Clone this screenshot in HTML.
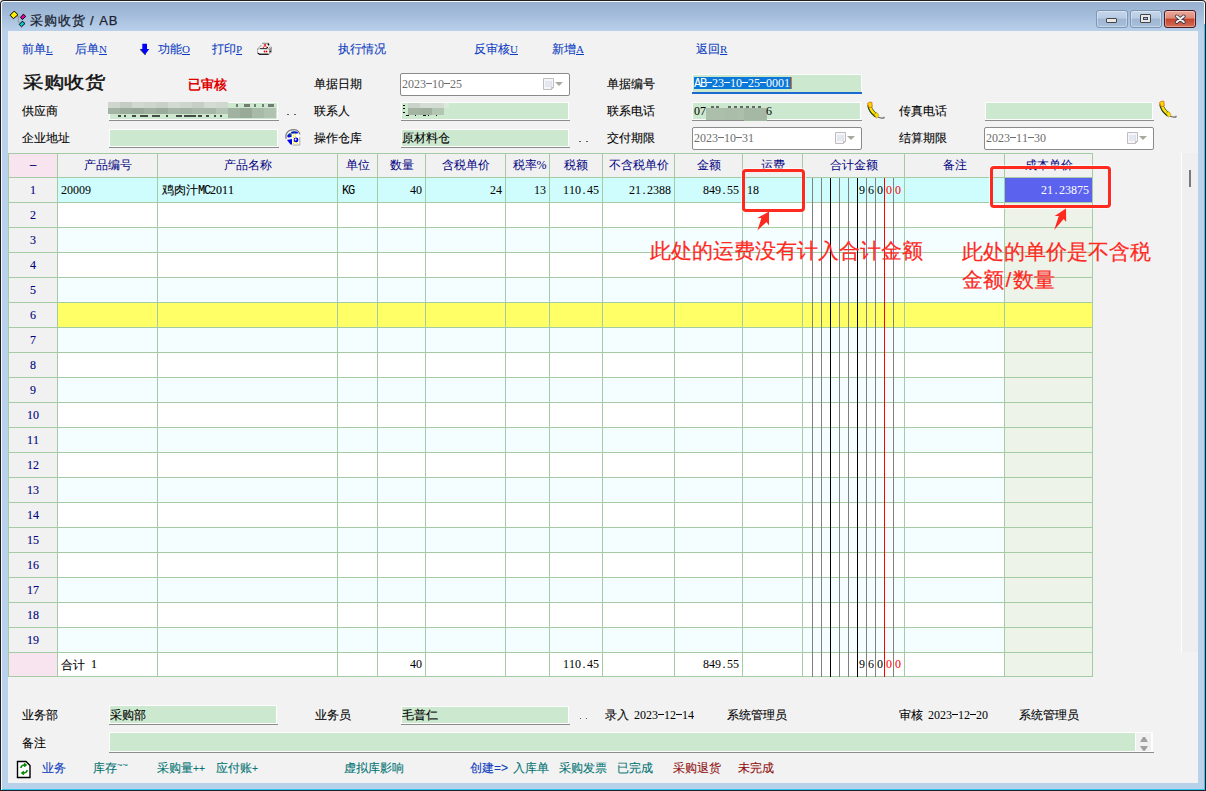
<!DOCTYPE html>
<html><head><meta charset="utf-8"><title>采购收货</title><style>
html,body{margin:0;padding:0;}
body{width:1206px;height:791px;overflow:hidden;position:relative;background:#f0f0f0;font-family:"Liberation Sans",sans-serif;}
.t{position:absolute;white-space:pre;}
.r{position:absolute;box-sizing:border-box;}
.k{-webkit-text-stroke-width:0.1px;}
.c{display:inline-block;width:6px;text-align:center;font-family:'Liberation Serif',serif;}
.hy{display:inline-block;width:6px;height:1px;background:currentColor;vertical-align:4px;}
.n{font-size:12px;line-height:14px;font-family:'Liberation Serif',serif;}
</style></head><body>
<div class="r" style="left:0px;top:0px;width:1206px;height:791px;background:#202020;border-radius:4px 4px 0 0"></div>
<div class="r" style="left:1px;top:1px;width:1204px;height:789px;background:#f4f8fc;border-radius:3px 3px 0 0"></div>
<div class="r" style="left:2px;top:2px;width:1202px;height:787px;background:linear-gradient(#97b0cf 0px,#a2bbd9 12px,#b5cde8 26px,#b9d1ea 30px,#b9d1ea 100%);border-radius:2px 2px 0 0"></div>
<div class="r" style="left:1204px;top:24px;width:1px;height:766px;background:#2ec8f2"></div>
<div class="r" style="left:2px;top:789px;width:1203px;height:1px;background:#2ec8f2"></div>
<div class="r" style="left:1205px;top:24px;width:1px;height:767px;background:#202020"></div>
<div class="r" style="left:0px;top:790px;width:1206px;height:1px;background:#202020"></div>
<div class="r" style="left:8px;top:31px;width:1190px;height:752px;background:#f2f2f2"></div>
<svg class="r" style="left:9px;top:10px" width="18" height="18" viewBox="0 0 18 18">
<path d="M7 6.3 H11 M9.3 6.3 V12.3 H11" stroke="#999" stroke-width="1" fill="none"/>
<polygon points="1.1,5.2 5.2,1.1 9,4.7 4.4,8.7" fill="#ffee00" stroke="#000" stroke-width="1"/>
<polygon points="11.5,7.4 14.3,4.2 16.8,6.4 13.3,9.5" fill="#ee00aa" stroke="#000" stroke-width="1"/>
<polygon points="10.2,14.5 13.3,11.2 16,13.5 12.5,16.8" fill="#00cccc" stroke="#000" stroke-width="1"/>
</svg>
<div class="t" style="left:30px;top:13px;font-size:13px;line-height:16px;color:#1a2230;font-family:'Liberation Sans', sans-serif;-webkit-text-stroke:0.25px #1a2230;letter-spacing:0.9px;word-spacing:0px;">采购收货 / AB</div>
<div class="r" style="left:1096px;top:10px;width:32px;height:18px;border:1px solid #7e96b4;border-radius:3px;background:linear-gradient(#c5d7ec 0%,#b6cbe4 45%,#9fb6d2 50%,#a9c0dc 100%);box-shadow:inset 0 0 0 1px rgba(255,255,255,0.35)"><div class="r" style="left:9px;top:7px;width:11px;height:5px;background:#e8e8e8;border:1px solid #444;border-radius:1px"></div></div>
<div class="r" style="left:1130px;top:10px;width:32px;height:18px;border:1px solid #7e96b4;border-radius:3px;background:linear-gradient(#c5d7ec 0%,#b6cbe4 45%,#9fb6d2 50%,#a9c0dc 100%);box-shadow:inset 0 0 0 1px rgba(255,255,255,0.35)"><div class="r" style="left:9px;top:3px;width:11px;height:9px;background:#e8e8e8;border:1px solid #444;border-radius:1px"><div class="r" style="left:2px;top:2px;width:5px;height:3px;border:1px solid #445;background:#a8bcd8"></div></div></div>
<div class="r" style="left:1164px;top:10px;width:32px;height:18px;border:1px solid #4a1a1e;border-radius:3px;background:linear-gradient(#eca89a 0%,#dd8a78 45%,#c4422a 50%,#d4705a 100%);box-shadow:inset 0 0 0 1px rgba(255,255,255,0.35)"><svg class="r" style="left:9px;top:3px" width="13" height="11" viewBox="0 0 13 11"><path d="M2.8 2.3 L9.8 8 M9.8 2.3 L2.8 8" stroke="#3a3a4a" stroke-width="3.6" stroke-linecap="round"/><path d="M2.8 2.3 L9.8 8 M9.8 2.3 L2.8 8" stroke="#f4f4f4" stroke-width="2.0" stroke-linecap="round"/></svg></div>
<div class="t" style="left:22px;top:42px;line-height:14px;color:#0c3cc0;font-size:12px;-webkit-text-stroke:0.1px #0c3cc0">前单<span style="font-family:'Liberation Serif', serif;font-size:11px;text-decoration:underline;-webkit-text-stroke:0">L</span></div>
<div class="t" style="left:75px;top:42px;line-height:14px;color:#0c3cc0;font-size:12px;-webkit-text-stroke:0.1px #0c3cc0">后单<span style="font-family:'Liberation Serif', serif;font-size:11px;text-decoration:underline;-webkit-text-stroke:0">N</span></div>
<svg class="r" style="left:134px;top:38px" width="22" height="22" viewBox="0 0 22 22"><path d="M6.3 11.3 L11.5 16.8" stroke="#5a5a20" stroke-width="1.3"/><path d="M8.3 5.8 H13 V11 H15.3 L11 16.7 L6.3 11 H8.3 Z" fill="#0000ff"/></svg>
<div class="t" style="left:158px;top:42px;line-height:14px;color:#0c3cc0;font-size:12px;-webkit-text-stroke:0.1px #0c3cc0">功能<span style="font-family:'Liberation Serif', serif;font-size:11px;text-decoration:underline;-webkit-text-stroke:0">O</span></div>
<div class="t" style="left:212px;top:42px;line-height:14px;color:#0c3cc0;font-size:12px;-webkit-text-stroke:0.1px #0c3cc0">打印<span style="font-family:'Liberation Serif', serif;font-size:11px;text-decoration:underline;-webkit-text-stroke:0">P</span></div>
<svg class="r" style="left:252px;top:38px" width="26" height="22" viewBox="0 0 26 22"><path d="M10 5.3 H17" stroke="#888" stroke-width="1"/><circle cx="16.5" cy="6.5" r="0.9" fill="#000"/><path d="M11 9.5 L14 6.3 M12 6.5 L15 9.5" stroke="#e00" stroke-width="1.1" stroke-dasharray="1 0.6"/><path d="M9.5 7 L5.5 11" stroke="#888" stroke-width="0.9"/><path d="M8 10.5 H15 L15.6 9" stroke="#000" stroke-width="1" fill="none"/><path d="M5.5 11 H17 L17.5 9 H19.5 V14 L17 16.5 H7 L5.5 15 Z" fill="#fff" stroke="#999" stroke-width="0.8"/><path d="M16.8 11 L19.7 9 V13.5 L17 16" fill="#999"/><path d="M7 16.2 H16.5" stroke="#000" stroke-width="1.2"/><circle cx="6.5" cy="15.5" r="0.8" fill="#000"/><circle cx="18.3" cy="13.5" r="0.8" fill="#222"/><circle cx="12.5" cy="13.5" r="0.9" fill="#e00"/><circle cx="14.5" cy="13.5" r="0.9" fill="#e00"/></svg>
<div class="t k" style="left:338px;top:42px;font-size:12px;line-height:14px;color:#0c3cc0;font-family:'Liberation Sans', sans-serif;-webkit-text-stroke:0.1px #0c3cc0;">执行情况</div>
<div class="t" style="left:474px;top:42px;line-height:14px;color:#0c3cc0;font-size:12px;-webkit-text-stroke:0.1px #0c3cc0">反审核<span style="font-family:'Liberation Serif', serif;font-size:11px;text-decoration:underline;-webkit-text-stroke:0">U</span></div>
<div class="t" style="left:552px;top:42px;line-height:14px;color:#0c3cc0;font-size:12px;-webkit-text-stroke:0.1px #0c3cc0">新增<span style="font-family:'Liberation Serif', serif;font-size:11px;text-decoration:underline;-webkit-text-stroke:0">A</span></div>
<div class="t" style="left:696px;top:42px;line-height:14px;color:#0c3cc0;font-size:12px;-webkit-text-stroke:0.1px #0c3cc0">返回<span style="font-family:'Liberation Serif', serif;font-size:11px;text-decoration:underline;-webkit-text-stroke:0">R</span></div>
<div class="t" style="left:23px;top:73px;font-size:20px;line-height:20px;color:#111;font-family:'Liberation Serif', serif;-webkit-text-stroke:0.5px #111;transform:scale(1.03,0.86);transform-origin:0 0;">采购收货</div>
<div class="t" style="left:188px;top:78px;font-size:13px;line-height:14px;color:#e00000;font-family:'Liberation Sans', sans-serif;font-weight:bold;">已审核</div>
<div class="t k" style="left:314px;top:77px;font-size:12px;line-height:14px;color:#000;font-family:'Liberation Sans', sans-serif;">单据日期</div>
<div class="r" style="left:400px;top:73px;width:170px;height:23px;background:#fff;border:1px solid #8a8a8a;border-radius:2px"></div>
<div class="t n" style="left:402px;top:77px;color:#6d6d6d;"><span class="c">2</span><span class="c">0</span><span class="c">2</span><span class="c">3</span><span class="c"><i class="hy"></i></span><span class="c">1</span><span class="c">0</span><span class="c"><i class="hy"></i></span><span class="c">2</span><span class="c">5</span></div>
<svg class="r" style="left:543px;top:78px" width="12" height="13" viewBox="0 0 12 13"><path d="M0.5 0.5 H10.5 V9.5 L8.5 11.5 H0.5 Z" fill="#f4f6fc" stroke="#c4bcbc" stroke-width="1"/><rect x="2" y="3" width="7" height="6" fill="#dde0e8"/><g fill="#fff"><rect x="2.5" y="3.5" width="1" height="1"/><rect x="4.5" y="3.5" width="1" height="1"/><rect x="6.5" y="3.5" width="1" height="1"/><rect x="2.5" y="5.5" width="1" height="1"/><rect x="4.5" y="5.5" width="1" height="1"/><rect x="6.5" y="5.5" width="1" height="1"/><rect x="2.5" y="7.5" width="1" height="1"/><rect x="4.5" y="7.5" width="1" height="1"/><rect x="6.5" y="7.5" width="1" height="1"/></g><path d="M8.5 11.5 V9.5 H10.5" fill="#ccc" stroke="#c4bcbc" stroke-width="1"/></svg>
<svg class="r" style="left:555px;top:82px" width="8" height="5" viewBox="0 0 8 5"><path d="M0 0 H8 L4 4 Z" fill="#a8a8a0"/></svg>
<div class="t k" style="left:607px;top:77px;font-size:12px;line-height:14px;color:#000;font-family:'Liberation Sans', sans-serif;">单据编号</div>
<div class="r" style="left:692px;top:74px;width:170px;height:19px;background:#cce8cf;border:1px solid #fbfbfb"></div>
<div class="r" style="left:692px;top:92px;width:170px;height:2px;background:#1a6ad0"></div>
<div class="r" style="left:694px;top:77px;width:98px;height:12px;background:#0a78d8"></div>
<div class="t n" style="left:694px;top:76px;color:#fff;"><span class="c" style="font-size:12px;font-family:'Liberation Mono',monospace">A</span><span class="c" style="font-size:12px;font-family:'Liberation Mono',monospace">B</span><span class="c"><i class="hy"></i></span><span class="c">2</span><span class="c">3</span><span class="c"><i class="hy"></i></span><span class="c">1</span><span class="c">0</span><span class="c"><i class="hy"></i></span><span class="c">2</span><span class="c">5</span><span class="c"><i class="hy"></i></span><span class="c">0</span><span class="c">0</span><span class="c">0</span><span class="c">1</span></div>
<div class="r" style="left:791px;top:77px;width:1px;height:12px;background:#ff6a00"></div>
<div class="t k" style="left:22px;top:104px;font-size:12px;line-height:14px;color:#000;font-family:'Liberation Sans', sans-serif;">供应商</div>
<div class="r" style="left:109px;top:102px;width:169px;height:18px;background:#cce8cf;border:1px solid #fdfdfd"></div>
<div class="r" style="left:109px;top:120px;width:170px;height:1px;background:#8c8c8c"></div>
<div class="r" style="left:108px;top:102px;width:12px;height:6px;background:#ced6ce"></div>
<div class="r" style="left:120px;top:102px;width:12px;height:6px;background:#c4ccc4"></div>
<div class="r" style="left:132px;top:102px;width:12px;height:6px;background:#d0d8d0"></div>
<div class="r" style="left:144px;top:102px;width:12px;height:6px;background:#cdd5cd"></div>
<div class="r" style="left:156px;top:102px;width:12px;height:6px;background:#c8d0c8"></div>
<div class="r" style="left:168px;top:102px;width:12px;height:6px;background:#d2dad2"></div>
<div class="r" style="left:180px;top:102px;width:12px;height:6px;background:#cdd6cd"></div>
<div class="r" style="left:192px;top:102px;width:12px;height:6px;background:#c6cec6"></div>
<div class="r" style="left:204px;top:102px;width:12px;height:6px;background:#d3dbd3"></div>
<div class="r" style="left:216px;top:102px;width:12px;height:6px;background:#cfd7cf"></div>
<div class="r" style="left:108px;top:108px;width:12px;height:6px;background:#a4b4a4"></div>
<div class="r" style="left:120px;top:108px;width:12px;height:6px;background:#9cac9c"></div>
<div class="r" style="left:132px;top:108px;width:12px;height:6px;background:#98a898"></div>
<div class="r" style="left:144px;top:108px;width:12px;height:6px;background:#a0b0a0"></div>
<div class="r" style="left:156px;top:108px;width:12px;height:6px;background:#9bab9b"></div>
<div class="r" style="left:168px;top:108px;width:12px;height:6px;background:#a6b6a6"></div>
<div class="r" style="left:180px;top:108px;width:12px;height:6px;background:#a3b3a3"></div>
<div class="r" style="left:192px;top:108px;width:12px;height:6px;background:#a9b9a9"></div>
<div class="r" style="left:204px;top:108px;width:12px;height:6px;background:#a7b7a7"></div>
<div class="r" style="left:216px;top:108px;width:12px;height:6px;background:#b4c4b4"></div>
<div class="r" style="left:228px;top:108px;width:12px;height:10px;background:#a2b2a2"></div>
<div class="r" style="left:240px;top:108px;width:12px;height:10px;background:#9aaa9a"></div>
<div class="r" style="left:252px;top:108px;width:12px;height:10px;background:#a8baa8"></div>
<div class="r" style="left:264px;top:108px;width:12px;height:10px;background:#b0c2b0"></div>
<div class="r" style="left:118px;top:115px;width:3px;height:2px;background:#222;opacity:0.8"></div>
<div class="r" style="left:124px;top:115px;width:2px;height:2px;background:#222;opacity:0.8"></div>
<div class="r" style="left:132px;top:115px;width:4px;height:2px;background:#222;opacity:0.8"></div>
<div class="r" style="left:140px;top:115px;width:8px;height:2px;background:#222;opacity:0.8"></div>
<div class="r" style="left:152px;top:115px;width:8px;height:2px;background:#222;opacity:0.8"></div>
<div class="r" style="left:166px;top:115px;width:2px;height:2px;background:#222;opacity:0.8"></div>
<div class="r" style="left:176px;top:115px;width:6px;height:2px;background:#222;opacity:0.8"></div>
<div class="r" style="left:184px;top:115px;width:12px;height:2px;background:#222;opacity:0.8"></div>
<div class="r" style="left:198px;top:115px;width:4px;height:2px;background:#222;opacity:0.8"></div>
<div class="r" style="left:206px;top:115px;width:3px;height:2px;background:#222;opacity:0.8"></div>
<div class="r" style="left:214px;top:115px;width:2px;height:2px;background:#222;opacity:0.8"></div>
<div class="r" style="left:220px;top:115px;width:2px;height:2px;background:#222;opacity:0.8"></div>
<div class="r" style="left:236px;top:104px;width:2px;height:3px;background:#333;opacity:0.6"></div>
<div class="r" style="left:244px;top:104px;width:6px;height:3px;background:#333;opacity:0.6"></div>
<div class="r" style="left:254px;top:104px;width:2px;height:3px;background:#333;opacity:0.6"></div>
<div class="r" style="left:262px;top:104px;width:2px;height:3px;background:#333;opacity:0.6"></div>
<div class="r" style="left:268px;top:104px;width:6px;height:3px;background:#333;opacity:0.6"></div>
<div class="r" style="left:287px;top:114px;width:2px;height:1px;background:#606060"></div>
<div class="r" style="left:294px;top:114px;width:2px;height:1px;background:#606060"></div>
<div class="t k" style="left:314px;top:104px;font-size:12px;line-height:14px;color:#000;font-family:'Liberation Sans', sans-serif;">联系人</div>
<div class="r" style="left:401px;top:102px;width:168px;height:18px;background:#cce8cf;border:1px solid #fdfdfd"></div>
<div class="r" style="left:401px;top:120px;width:169px;height:1px;background:#8c8c8c"></div>
<div class="r" style="left:403px;top:105px;width:2px;height:1px;background:#111"></div>
<div class="r" style="left:403px;top:108px;width:2px;height:1px;background:#111"></div>
<div class="r" style="left:403px;top:112px;width:2px;height:1px;background:#111"></div>
<div class="r" style="left:408px;top:103px;width:12px;height:5px;background:#c9d3c9"></div>
<div class="r" style="left:420px;top:103px;width:12px;height:5px;background:#d3ddd3"></div>
<div class="r" style="left:432px;top:103px;width:12px;height:5px;background:#d2dcd2"></div>
<div class="r" style="left:444px;top:103px;width:5px;height:5px;background:#dce8dc"></div>
<div class="r" style="left:408px;top:108px;width:12px;height:7px;background:#a3b4a3"></div>
<div class="r" style="left:420px;top:108px;width:12px;height:7px;background:#9fb09f"></div>
<div class="r" style="left:432px;top:108px;width:12px;height:7px;background:#b3c5b3"></div>
<div class="r" style="left:406px;top:115px;width:3px;height:1px;background:#111"></div>
<div class="r" style="left:415px;top:115px;width:1px;height:1px;background:#111"></div>
<div class="r" style="left:423px;top:115px;width:3px;height:1px;background:#111"></div>
<div class="r" style="left:428px;top:115px;width:1px;height:1px;background:#111"></div>
<div class="r" style="left:436px;top:115px;width:1px;height:1px;background:#111"></div>
<div class="t k" style="left:607px;top:104px;font-size:12px;line-height:14px;color:#000;font-family:'Liberation Sans', sans-serif;">联系电话</div>
<div class="r" style="left:692px;top:102px;width:169px;height:18px;background:#cce8cf;border:1px solid #fdfdfd"></div>
<div class="r" style="left:692px;top:120px;width:170px;height:1px;background:#8c8c8c"></div>
<div class="t n" style="left:694px;top:104px;color:#000;"><span class="c">0</span><span class="c">7</span></div>
<div class="r" style="left:706px;top:108px;width:61px;height:12px;background:#abbfab"></div>
<div class="r" style="left:725px;top:108px;width:12px;height:12px;background:#a9bda9"></div>
<div class="r" style="left:744px;top:108px;width:23px;height:13px;background:#a4b8a4"></div>
<div class="r" style="left:711px;top:106px;width:3px;height:2px;background:#333;opacity:0.7"></div>
<div class="r" style="left:716px;top:106px;width:3px;height:2px;background:#333;opacity:0.7"></div>
<div class="r" style="left:728px;top:106px;width:3px;height:2px;background:#333;opacity:0.7"></div>
<div class="r" style="left:734px;top:106px;width:3px;height:2px;background:#333;opacity:0.7"></div>
<div class="r" style="left:740px;top:106px;width:3px;height:2px;background:#333;opacity:0.7"></div>
<div class="r" style="left:746px;top:106px;width:3px;height:2px;background:#333;opacity:0.7"></div>
<div class="r" style="left:752px;top:106px;width:3px;height:2px;background:#333;opacity:0.7"></div>
<div class="r" style="left:758px;top:106px;width:3px;height:2px;background:#333;opacity:0.7"></div>
<div class="t n" style="left:766px;top:104px;color:#000;"><span class="c">6</span></div>
<svg class="r" style="left:862px;top:98px" width="26" height="24" viewBox="0 0 26 24"><path d="M16 19.3 Q19 20.5 22 19.8 L22 18.8" stroke="#666" stroke-width="1.2" fill="none"/><path d="M7.5 8 Q8.5 13 13.5 17" stroke="#1a3a1a" stroke-width="4.2" fill="none" stroke-linecap="round"/><path d="M7.8 8 Q8.8 12.8 13.5 16.6" stroke="#ffe000" stroke-width="2.6" fill="none" stroke-linecap="round"/><path d="M5.5 5.5 Q7 3.8 9.8 4.2 L10.3 8.8 L7 9.8 Z" fill="#ffd800" stroke="#cc5a10" stroke-width="0.7"/><path d="M12 16 L15 14.7 L17 17.8 L14.3 20.3 Z" fill="#ffe000" stroke="#b09000" stroke-width="0.6"/></svg>
<div class="t k" style="left:899px;top:104px;font-size:12px;line-height:14px;color:#000;font-family:'Liberation Sans', sans-serif;">传真电话</div>
<div class="r" style="left:985px;top:102px;width:168px;height:18px;background:#cce8cf;border:1px solid #fdfdfd"></div>
<div class="r" style="left:985px;top:120px;width:169px;height:1px;background:#8c8c8c"></div>
<svg class="r" style="left:1154px;top:97px" width="26" height="24" viewBox="0 0 26 24"><path d="M16 19.3 Q19 20.5 22 19.8 L22 18.8" stroke="#666" stroke-width="1.2" fill="none"/><path d="M7.5 8 Q8.5 13 13.5 17" stroke="#1a3a1a" stroke-width="4.2" fill="none" stroke-linecap="round"/><path d="M7.8 8 Q8.8 12.8 13.5 16.6" stroke="#ffe000" stroke-width="2.6" fill="none" stroke-linecap="round"/><path d="M5.5 5.5 Q7 3.8 9.8 4.2 L10.3 8.8 L7 9.8 Z" fill="#ffd800" stroke="#cc5a10" stroke-width="0.7"/><path d="M12 16 L15 14.7 L17 17.8 L14.3 20.3 Z" fill="#ffe000" stroke="#b09000" stroke-width="0.6"/></svg>
<div class="t k" style="left:22px;top:131px;font-size:12px;line-height:14px;color:#000;font-family:'Liberation Sans', sans-serif;">企业地址</div>
<div class="r" style="left:109px;top:129px;width:169px;height:18px;background:#cce8cf;border:1px solid #fdfdfd"></div>
<div class="r" style="left:109px;top:147px;width:170px;height:1px;background:#8c8c8c"></div>
<svg class="r" style="left:280px;top:125px" width="26" height="24" viewBox="0 0 26 24"><path d="M6 14 Q5 8 9.5 5.5 Q13 4 16.5 5 Q19 6 20 9.5" stroke="#777" stroke-width="1.2" fill="none"/><path d="M11 7 Q14 5.5 18 7 L17.5 8.5 L11.5 8.5 Z" fill="#0000ee"/><path d="M13 6.5 L15 8" stroke="#080" stroke-width="1"/><path d="M9 8.5 H11.5 V12 L8 12.5 L7 11 Z" fill="#0000ee"/><rect x="9.5" y="8.5" width="1.5" height="2" fill="#080"/><path d="M7 15 L12 14 V19.5 L10.5 19.5 Z" fill="#0000ee"/><rect x="12" y="9" width="7.5" height="10.5" fill="#fff"/><path d="M19.8 12 V20 H12.5" stroke="#aaa" stroke-width="1" fill="none"/><circle cx="16" cy="15" r="2.4" fill="#0000cc"/><circle cx="15.6" cy="14.6" r="1" fill="#fff"/><g fill="#ffee00"><circle cx="13.5" cy="10.5" r="0.7"/><circle cx="15.5" cy="9.5" r="0.7"/><circle cx="15.5" cy="11.5" r="0.7"/><circle cx="13.5" cy="12.5" r="0.7"/><circle cx="13.5" cy="18.5" r="0.7"/><circle cx="15.5" cy="17.5" r="0.7"/><circle cx="17.5" cy="18.5" r="0.7"/><circle cx="13.5" cy="16.5" r="0.7"/></g></svg>
<div class="t k" style="left:314px;top:131px;font-size:12px;line-height:14px;color:#000;font-family:'Liberation Sans', sans-serif;">操作仓库</div>
<div class="r" style="left:401px;top:129px;width:168px;height:18px;background:#cce8cf;border:1px solid #fdfdfd"></div>
<div class="r" style="left:401px;top:147px;width:169px;height:1px;background:#8c8c8c"></div>
<div class="t k" style="left:402px;top:131px;font-size:12px;line-height:14px;color:#000;font-family:'Liberation Sans', sans-serif;">原材料仓</div>
<div class="r" style="left:579px;top:141px;width:2px;height:1px;background:#606060"></div>
<div class="r" style="left:586px;top:141px;width:2px;height:1px;background:#606060"></div>
<div class="t k" style="left:607px;top:131px;font-size:12px;line-height:14px;color:#000;font-family:'Liberation Sans', sans-serif;">交付期限</div>
<div class="r" style="left:692px;top:127px;width:170px;height:23px;background:#fff;border:1px solid #8a8a8a;border-radius:2px"></div>
<div class="t n" style="left:694px;top:131px;color:#6d6d6d;"><span class="c">2</span><span class="c">0</span><span class="c">2</span><span class="c">3</span><span class="c"><i class="hy"></i></span><span class="c">1</span><span class="c">0</span><span class="c"><i class="hy"></i></span><span class="c">3</span><span class="c">1</span></div>
<svg class="r" style="left:835px;top:132px" width="12" height="13" viewBox="0 0 12 13"><path d="M0.5 0.5 H10.5 V9.5 L8.5 11.5 H0.5 Z" fill="#f4f6fc" stroke="#c4bcbc" stroke-width="1"/><rect x="2" y="3" width="7" height="6" fill="#dde0e8"/><g fill="#fff"><rect x="2.5" y="3.5" width="1" height="1"/><rect x="4.5" y="3.5" width="1" height="1"/><rect x="6.5" y="3.5" width="1" height="1"/><rect x="2.5" y="5.5" width="1" height="1"/><rect x="4.5" y="5.5" width="1" height="1"/><rect x="6.5" y="5.5" width="1" height="1"/><rect x="2.5" y="7.5" width="1" height="1"/><rect x="4.5" y="7.5" width="1" height="1"/><rect x="6.5" y="7.5" width="1" height="1"/></g><path d="M8.5 11.5 V9.5 H10.5" fill="#ccc" stroke="#c4bcbc" stroke-width="1"/></svg>
<svg class="r" style="left:847px;top:136px" width="8" height="5" viewBox="0 0 8 5"><path d="M0 0 H8 L4 4 Z" fill="#a8a8a0"/></svg>
<div class="t k" style="left:899px;top:131px;font-size:12px;line-height:14px;color:#000;font-family:'Liberation Sans', sans-serif;">结算期限</div>
<div class="r" style="left:984px;top:127px;width:170px;height:23px;background:#fff;border:1px solid #8a8a8a;border-radius:2px"></div>
<div class="t n" style="left:986px;top:131px;color:#6d6d6d;"><span class="c">2</span><span class="c">0</span><span class="c">2</span><span class="c">3</span><span class="c"><i class="hy"></i></span><span class="c">1</span><span class="c">1</span><span class="c"><i class="hy"></i></span><span class="c">3</span><span class="c">0</span></div>
<svg class="r" style="left:1127px;top:132px" width="12" height="13" viewBox="0 0 12 13"><path d="M0.5 0.5 H10.5 V9.5 L8.5 11.5 H0.5 Z" fill="#f4f6fc" stroke="#c4bcbc" stroke-width="1"/><rect x="2" y="3" width="7" height="6" fill="#dde0e8"/><g fill="#fff"><rect x="2.5" y="3.5" width="1" height="1"/><rect x="4.5" y="3.5" width="1" height="1"/><rect x="6.5" y="3.5" width="1" height="1"/><rect x="2.5" y="5.5" width="1" height="1"/><rect x="4.5" y="5.5" width="1" height="1"/><rect x="6.5" y="5.5" width="1" height="1"/><rect x="2.5" y="7.5" width="1" height="1"/><rect x="4.5" y="7.5" width="1" height="1"/><rect x="6.5" y="7.5" width="1" height="1"/></g><path d="M8.5 11.5 V9.5 H10.5" fill="#ccc" stroke="#c4bcbc" stroke-width="1"/></svg>
<svg class="r" style="left:1139px;top:136px" width="8" height="5" viewBox="0 0 8 5"><path d="M0 0 H8 L4 4 Z" fill="#a8a8a0"/></svg>
<div class="r" style="left:8px;top:153px;width:1085px;height:524px;background:#ffffff"></div>
<div class="r" style="left:8px;top:153px;width:1085px;height:24px;background:#f1f1f1"></div>
<div class="r" style="left:8px;top:153px;width:49px;height:24px;background:#f7e4ef"></div>
<div class="r" style="left:8px;top:177px;width:49px;height:475px;background:#f1f1f1"></div>
<div class="r" style="left:8px;top:652px;width:49px;height:24px;background:#f7e4ef"></div>
<div class="r" style="left:57px;top:177px;width:1035px;height:25px;background:#cffcfc"></div>
<div class="r" style="left:57px;top:202px;width:1035px;height:25px;background:#ffffff"></div>
<div class="r" style="left:1004px;top:202px;width:88px;height:25px;background:#eef3e9"></div>
<div class="r" style="left:57px;top:227px;width:1035px;height:25px;background:#f4fdff"></div>
<div class="r" style="left:1004px;top:227px;width:88px;height:25px;background:#eef3e9"></div>
<div class="r" style="left:57px;top:252px;width:1035px;height:25px;background:#ffffff"></div>
<div class="r" style="left:1004px;top:252px;width:88px;height:25px;background:#eef3e9"></div>
<div class="r" style="left:57px;top:277px;width:1035px;height:25px;background:#f4fdff"></div>
<div class="r" style="left:1004px;top:277px;width:88px;height:25px;background:#eef3e9"></div>
<div class="r" style="left:57px;top:302px;width:1035px;height:25px;background:#ffff66"></div>
<div class="r" style="left:57px;top:327px;width:1035px;height:25px;background:#f4fdff"></div>
<div class="r" style="left:1004px;top:327px;width:88px;height:25px;background:#eef3e9"></div>
<div class="r" style="left:57px;top:352px;width:1035px;height:25px;background:#ffffff"></div>
<div class="r" style="left:1004px;top:352px;width:88px;height:25px;background:#eef3e9"></div>
<div class="r" style="left:57px;top:377px;width:1035px;height:25px;background:#f4fdff"></div>
<div class="r" style="left:1004px;top:377px;width:88px;height:25px;background:#eef3e9"></div>
<div class="r" style="left:57px;top:402px;width:1035px;height:25px;background:#ffffff"></div>
<div class="r" style="left:1004px;top:402px;width:88px;height:25px;background:#eef3e9"></div>
<div class="r" style="left:57px;top:427px;width:1035px;height:25px;background:#f4fdff"></div>
<div class="r" style="left:1004px;top:427px;width:88px;height:25px;background:#eef3e9"></div>
<div class="r" style="left:57px;top:452px;width:1035px;height:25px;background:#ffffff"></div>
<div class="r" style="left:1004px;top:452px;width:88px;height:25px;background:#eef3e9"></div>
<div class="r" style="left:57px;top:477px;width:1035px;height:25px;background:#f4fdff"></div>
<div class="r" style="left:1004px;top:477px;width:88px;height:25px;background:#eef3e9"></div>
<div class="r" style="left:57px;top:502px;width:1035px;height:25px;background:#ffffff"></div>
<div class="r" style="left:1004px;top:502px;width:88px;height:25px;background:#eef3e9"></div>
<div class="r" style="left:57px;top:527px;width:1035px;height:25px;background:#f4fdff"></div>
<div class="r" style="left:1004px;top:527px;width:88px;height:25px;background:#eef3e9"></div>
<div class="r" style="left:57px;top:552px;width:1035px;height:25px;background:#ffffff"></div>
<div class="r" style="left:1004px;top:552px;width:88px;height:25px;background:#eef3e9"></div>
<div class="r" style="left:57px;top:577px;width:1035px;height:25px;background:#f4fdff"></div>
<div class="r" style="left:1004px;top:577px;width:88px;height:25px;background:#eef3e9"></div>
<div class="r" style="left:57px;top:602px;width:1035px;height:25px;background:#ffffff"></div>
<div class="r" style="left:1004px;top:602px;width:88px;height:25px;background:#eef3e9"></div>
<div class="r" style="left:57px;top:627px;width:1035px;height:25px;background:#f4fdff"></div>
<div class="r" style="left:1004px;top:627px;width:88px;height:25px;background:#eef3e9"></div>
<div class="r" style="left:1004px;top:652px;width:88px;height:24px;background:#eef3e9"></div>
<div class="r" style="left:1005px;top:178px;width:87px;height:24px;background:#5a62ee"></div>
<div class="r" style="left:812px;top:178px;width:1px;height:499px;background:#808080"></div>
<div class="r" style="left:821px;top:178px;width:1px;height:499px;background:#808080"></div>
<div class="r" style="left:830px;top:178px;width:1px;height:499px;background:#000"></div>
<div class="r" style="left:839px;top:178px;width:1px;height:499px;background:#808080"></div>
<div class="r" style="left:848px;top:178px;width:1px;height:499px;background:#808080"></div>
<div class="r" style="left:857px;top:178px;width:1px;height:499px;background:#000"></div>
<div class="r" style="left:866px;top:178px;width:1px;height:499px;background:#808080"></div>
<div class="r" style="left:875px;top:178px;width:1px;height:499px;background:#808080"></div>
<div class="r" style="left:884px;top:178px;width:1px;height:499px;background:#ff0000"></div>
<div class="r" style="left:893px;top:178px;width:1px;height:499px;background:#808080"></div>
<div class="r" style="left:8px;top:153px;width:1px;height:524px;background:#a5cba5"></div>
<div class="r" style="left:57px;top:153px;width:1px;height:524px;background:#a5cba5"></div>
<div class="r" style="left:157px;top:153px;width:1px;height:524px;background:#a5cba5"></div>
<div class="r" style="left:337px;top:153px;width:1px;height:524px;background:#a5cba5"></div>
<div class="r" style="left:377px;top:153px;width:1px;height:524px;background:#a5cba5"></div>
<div class="r" style="left:425px;top:153px;width:1px;height:524px;background:#a5cba5"></div>
<div class="r" style="left:505px;top:153px;width:1px;height:524px;background:#a5cba5"></div>
<div class="r" style="left:549px;top:153px;width:1px;height:524px;background:#a5cba5"></div>
<div class="r" style="left:602px;top:153px;width:1px;height:524px;background:#a5cba5"></div>
<div class="r" style="left:674px;top:153px;width:1px;height:524px;background:#a5cba5"></div>
<div class="r" style="left:742px;top:153px;width:1px;height:524px;background:#a5cba5"></div>
<div class="r" style="left:802px;top:153px;width:1px;height:524px;background:#a5cba5"></div>
<div class="r" style="left:904px;top:153px;width:1px;height:524px;background:#a5cba5"></div>
<div class="r" style="left:1004px;top:153px;width:1px;height:524px;background:#a5cba5"></div>
<div class="r" style="left:1092px;top:153px;width:1px;height:524px;background:#a5cba5"></div>
<div class="r" style="left:8px;top:177px;width:1085px;height:1px;background:#a5cba5"></div>
<div class="r" style="left:8px;top:202px;width:1085px;height:1px;background:#a5cba5"></div>
<div class="r" style="left:8px;top:227px;width:1085px;height:1px;background:#a5cba5"></div>
<div class="r" style="left:8px;top:252px;width:1085px;height:1px;background:#a5cba5"></div>
<div class="r" style="left:8px;top:277px;width:1085px;height:1px;background:#a5cba5"></div>
<div class="r" style="left:8px;top:302px;width:1085px;height:1px;background:#a5cba5"></div>
<div class="r" style="left:8px;top:327px;width:1085px;height:1px;background:#a5cba5"></div>
<div class="r" style="left:8px;top:352px;width:1085px;height:1px;background:#a5cba5"></div>
<div class="r" style="left:8px;top:377px;width:1085px;height:1px;background:#a5cba5"></div>
<div class="r" style="left:8px;top:402px;width:1085px;height:1px;background:#a5cba5"></div>
<div class="r" style="left:8px;top:427px;width:1085px;height:1px;background:#a5cba5"></div>
<div class="r" style="left:8px;top:452px;width:1085px;height:1px;background:#a5cba5"></div>
<div class="r" style="left:8px;top:477px;width:1085px;height:1px;background:#a5cba5"></div>
<div class="r" style="left:8px;top:502px;width:1085px;height:1px;background:#a5cba5"></div>
<div class="r" style="left:8px;top:527px;width:1085px;height:1px;background:#a5cba5"></div>
<div class="r" style="left:8px;top:552px;width:1085px;height:1px;background:#a5cba5"></div>
<div class="r" style="left:8px;top:577px;width:1085px;height:1px;background:#a5cba5"></div>
<div class="r" style="left:8px;top:602px;width:1085px;height:1px;background:#a5cba5"></div>
<div class="r" style="left:8px;top:627px;width:1085px;height:1px;background:#a5cba5"></div>
<div class="r" style="left:8px;top:652px;width:1085px;height:1px;background:#a5cba5"></div>
<div class="r" style="left:8px;top:676px;width:1085px;height:1px;background:#a5cba5"></div>
<div class="r" style="left:8px;top:153px;width:1085px;height:1px;background:#a5cba5"></div>
<div class="r" style="left:812px;top:178px;width:1px;height:499px;background:#808080"></div>
<div class="r" style="left:821px;top:178px;width:1px;height:499px;background:#808080"></div>
<div class="r" style="left:830px;top:178px;width:1px;height:499px;background:#000"></div>
<div class="r" style="left:839px;top:178px;width:1px;height:499px;background:#808080"></div>
<div class="r" style="left:848px;top:178px;width:1px;height:499px;background:#808080"></div>
<div class="r" style="left:857px;top:178px;width:1px;height:499px;background:#000"></div>
<div class="r" style="left:866px;top:178px;width:1px;height:499px;background:#808080"></div>
<div class="r" style="left:875px;top:178px;width:1px;height:499px;background:#808080"></div>
<div class="r" style="left:884px;top:178px;width:1px;height:499px;background:#ff0000"></div>
<div class="r" style="left:893px;top:178px;width:1px;height:499px;background:#808080"></div>
<div class="t" style="left:-117.0px;width:300px;text-align:center;top:158px;font-size:12px;line-height:14px;color:#000080;font-family:'Liberation Sans', sans-serif;">–</div>
<div class="t" style="left:-42.5px;width:300px;text-align:center;top:158px;font-size:12px;line-height:14px;color:#000080;font-family:'Liberation Sans', sans-serif;">产品编号</div>
<div class="t" style="left:97.5px;width:300px;text-align:center;top:158px;font-size:12px;line-height:14px;color:#000080;font-family:'Liberation Sans', sans-serif;">产品名称</div>
<div class="t" style="left:207.5px;width:300px;text-align:center;top:158px;font-size:12px;line-height:14px;color:#000080;font-family:'Liberation Sans', sans-serif;">单位</div>
<div class="t" style="left:251.5px;width:300px;text-align:center;top:158px;font-size:12px;line-height:14px;color:#000080;font-family:'Liberation Sans', sans-serif;">数量</div>
<div class="t" style="left:315.5px;width:300px;text-align:center;top:158px;font-size:12px;line-height:14px;color:#000080;font-family:'Liberation Sans', sans-serif;">含税单价</div>
<div class="t" style="left:377.5px;width:300px;text-align:center;top:158px;font-size:12px;line-height:14px;color:#000080;font-family:'Liberation Sans', sans-serif;">税率<span class="c">%</span></div>
<div class="t" style="left:426.0px;width:300px;text-align:center;top:158px;font-size:12px;line-height:14px;color:#000080;font-family:'Liberation Sans', sans-serif;">税额</div>
<div class="t" style="left:488.5px;width:300px;text-align:center;top:158px;font-size:12px;line-height:14px;color:#000080;font-family:'Liberation Sans', sans-serif;">不含税单价</div>
<div class="t" style="left:558.5px;width:300px;text-align:center;top:158px;font-size:12px;line-height:14px;color:#000080;font-family:'Liberation Sans', sans-serif;">金额</div>
<div class="t" style="left:622.5px;width:300px;text-align:center;top:158px;font-size:12px;line-height:14px;color:#000080;font-family:'Liberation Sans', sans-serif;">运费</div>
<div class="t" style="left:703.5px;width:300px;text-align:center;top:158px;font-size:12px;line-height:14px;color:#000080;font-family:'Liberation Sans', sans-serif;">合计金额</div>
<div class="t" style="left:804.5px;width:300px;text-align:center;top:158px;font-size:12px;line-height:14px;color:#000080;font-family:'Liberation Sans', sans-serif;">备注</div>
<div class="t" style="left:898.5px;width:300px;text-align:center;top:158px;font-size:12px;line-height:14px;color:#000080;font-family:'Liberation Sans', sans-serif;">成本单价</div>
<div class="t n" style="left:30px;top:183px;color:#000080;-webkit-text-stroke:0.1px #000080;"><span class="c">1</span></div>
<div class="t n" style="left:30px;top:208px;color:#000080;-webkit-text-stroke:0.1px #000080;"><span class="c">2</span></div>
<div class="t n" style="left:30px;top:233px;color:#000080;-webkit-text-stroke:0.1px #000080;"><span class="c">3</span></div>
<div class="t n" style="left:30px;top:258px;color:#000080;-webkit-text-stroke:0.1px #000080;"><span class="c">4</span></div>
<div class="t n" style="left:30px;top:283px;color:#000080;-webkit-text-stroke:0.1px #000080;"><span class="c">5</span></div>
<div class="t n" style="left:30px;top:308px;color:#000080;-webkit-text-stroke:0.1px #000080;"><span class="c">6</span></div>
<div class="t n" style="left:30px;top:333px;color:#000080;-webkit-text-stroke:0.1px #000080;"><span class="c">7</span></div>
<div class="t n" style="left:30px;top:358px;color:#000080;-webkit-text-stroke:0.1px #000080;"><span class="c">8</span></div>
<div class="t n" style="left:30px;top:383px;color:#000080;-webkit-text-stroke:0.1px #000080;"><span class="c">9</span></div>
<div class="t n" style="left:27px;top:408px;color:#000080;-webkit-text-stroke:0.1px #000080;"><span class="c">1</span><span class="c">0</span></div>
<div class="t n" style="left:27px;top:433px;color:#000080;-webkit-text-stroke:0.1px #000080;"><span class="c">1</span><span class="c">1</span></div>
<div class="t n" style="left:27px;top:458px;color:#000080;-webkit-text-stroke:0.1px #000080;"><span class="c">1</span><span class="c">2</span></div>
<div class="t n" style="left:27px;top:483px;color:#000080;-webkit-text-stroke:0.1px #000080;"><span class="c">1</span><span class="c">3</span></div>
<div class="t n" style="left:27px;top:508px;color:#000080;-webkit-text-stroke:0.1px #000080;"><span class="c">1</span><span class="c">4</span></div>
<div class="t n" style="left:27px;top:533px;color:#000080;-webkit-text-stroke:0.1px #000080;"><span class="c">1</span><span class="c">5</span></div>
<div class="t n" style="left:27px;top:558px;color:#000080;-webkit-text-stroke:0.1px #000080;"><span class="c">1</span><span class="c">6</span></div>
<div class="t n" style="left:27px;top:583px;color:#000080;-webkit-text-stroke:0.1px #000080;"><span class="c">1</span><span class="c">7</span></div>
<div class="t n" style="left:27px;top:608px;color:#000080;-webkit-text-stroke:0.1px #000080;"><span class="c">1</span><span class="c">8</span></div>
<div class="t n" style="left:27px;top:633px;color:#000080;-webkit-text-stroke:0.1px #000080;"><span class="c">1</span><span class="c">9</span></div>
<div class="t n" style="left:61px;top:183px;color:#000;"><span class="c">2</span><span class="c">0</span><span class="c">0</span><span class="c">0</span><span class="c">9</span></div>
<div class="t k" style="left:162px;top:183px;line-height:14px;font-size:12px">鸡肉汁<span class="n"><span class="c" style="font-size:12px;font-family:'Liberation Mono',monospace">M</span><span class="c" style="font-size:12px;font-family:'Liberation Mono',monospace">C</span><span class="c">2</span><span class="c">0</span><span class="c">1</span><span class="c">1</span></span></div>
<div class="t n" style="left:342px;top:183px;color:#000;"><span class="c" style="font-size:12px;font-family:'Liberation Mono',monospace">K</span><span class="c" style="font-size:12px;font-family:'Liberation Mono',monospace">G</span></div>
<div class="t n" style="left:410px;top:183px;color:#000;"><span class="c">4</span><span class="c">0</span></div>
<div class="t n" style="left:490px;top:183px;color:#000;"><span class="c">2</span><span class="c">4</span></div>
<div class="t n" style="left:534px;top:183px;color:#000;"><span class="c">1</span><span class="c">3</span></div>
<div class="t n" style="left:563px;top:183px;color:#000;"><span class="c">1</span><span class="c">1</span><span class="c">0</span><span class="c">.</span><span class="c">4</span><span class="c">5</span></div>
<div class="t n" style="left:629px;top:183px;color:#000;"><span class="c">2</span><span class="c">1</span><span class="c">.</span><span class="c">2</span><span class="c">3</span><span class="c">8</span><span class="c">8</span></div>
<div class="t n" style="left:703px;top:183px;color:#000;"><span class="c">8</span><span class="c">4</span><span class="c">9</span><span class="c">.</span><span class="c">5</span><span class="c">5</span></div>
<div class="t n" style="left:747px;top:183px;color:#000;"><span class="c">1</span><span class="c">8</span></div>
<div class="t n" style="left:859px;top:183px;color:#000;"><span class="c">9</span></div>
<div class="t n" style="left:868px;top:183px;color:#000;"><span class="c">6</span></div>
<div class="t n" style="left:877px;top:183px;color:#000;"><span class="c">0</span></div>
<div class="t n" style="left:886px;top:183px;color:#ff0000;"><span class="c">0</span></div>
<div class="t n" style="left:895px;top:183px;color:#ff0000;"><span class="c">0</span></div>
<div class="t n" style="left:1041px;top:183px;color:#fff;"><span class="c">2</span><span class="c">1</span><span class="c">.</span><span class="c">2</span><span class="c">3</span><span class="c">8</span><span class="c">7</span><span class="c">5</span></div>
<div class="t k" style="left:61px;top:658px;line-height:14px;font-size:12px">合计<span class="n" style="position:relative;top:-1px;margin-left:6px"><span class="c">1</span></span></div>
<div class="t n" style="left:410px;top:657px;color:#000;"><span class="c">4</span><span class="c">0</span></div>
<div class="t n" style="left:563px;top:657px;color:#000;"><span class="c">1</span><span class="c">1</span><span class="c">0</span><span class="c">.</span><span class="c">4</span><span class="c">5</span></div>
<div class="t n" style="left:703px;top:657px;color:#000;"><span class="c">8</span><span class="c">4</span><span class="c">9</span><span class="c">.</span><span class="c">5</span><span class="c">5</span></div>
<div class="t n" style="left:859px;top:657px;color:#000;"><span class="c">9</span></div>
<div class="t n" style="left:868px;top:657px;color:#000;"><span class="c">6</span></div>
<div class="t n" style="left:877px;top:657px;color:#000;"><span class="c">0</span></div>
<div class="t n" style="left:886px;top:657px;color:#ff0000;"><span class="c">0</span></div>
<div class="t n" style="left:895px;top:657px;color:#ff0000;"><span class="c">0</span></div>
<div class="r" style="left:1182px;top:153px;width:16px;height:499px;background:#efefef"></div>
<div class="r" style="left:1181px;top:153px;width:1px;height:499px;background:#ffffff"></div>
<div class="r" style="left:1189px;top:170px;width:2px;height:17px;background:#7a7a7a"></div>
<div class="r" style="left:742px;top:169px;width:63px;height:43px;border:3px solid #ff2a1f;border-radius:4px;box-shadow:0 0 1px 1px rgba(255,255,255,0.7)"></div>
<div class="r" style="left:990px;top:166px;width:121px;height:42px;border:3px solid #ff2a1f;border-radius:4px;box-shadow:0 0 1px 1px rgba(255,255,255,0.7)"></div>
<svg class="r" style="left:0;top:0" width="1206" height="791" viewBox="0 0 1206 791"><path d="M769 211.5 L769 225.5 L766.5 222 L757.4 230.5 L761.4 218 L757 218.3 Z" fill="#ff2a1f"/><path d="M1066 208.6 L1066.2 222 L1063.7 219 L1054.2 230 L1058.8 216 L1054.6 216 Z" fill="#ff2a1f"/></svg>
<div class="t" style="left:650px;top:240px;font-size:21px;line-height:21px;color:#ff2a1f;font-family:'Liberation Sans', sans-serif;-webkit-text-stroke:0.2px #ff2a1f;">此处的运费没有计入合计金额</div>
<div class="t" style="left:962px;top:241px;font-size:21px;line-height:21px;color:#ff2a1f;font-family:'Liberation Sans', sans-serif;-webkit-text-stroke:0.2px #ff2a1f;">此处的单价是不含税</div>
<div class="t" style="left:962px;top:269px;font-size:21px;line-height:21px;color:#ff2a1f;font-family:'Liberation Sans', sans-serif;-webkit-text-stroke:0.2px #ff2a1f;">金额<span style="margin:0 1.5px">/</span>数量</div>
<div class="t k" style="left:22px;top:708px;font-size:12px;line-height:14px;color:#000;font-family:'Liberation Sans', sans-serif;">业务部</div>
<div class="r" style="left:109px;top:705px;width:168px;height:19px;background:#cce8cf;border:1px solid #fdfdfd"></div>
<div class="r" style="left:109px;top:724px;width:169px;height:1px;background:#8c8c8c"></div>
<div class="t k" style="left:110px;top:708px;font-size:12px;line-height:14px;color:#000;font-family:'Liberation Sans', sans-serif;">采购部</div>
<div class="t k" style="left:315px;top:708px;font-size:12px;line-height:14px;color:#000;font-family:'Liberation Sans', sans-serif;">业务员</div>
<div class="r" style="left:401px;top:706px;width:168px;height:18px;background:#cce8cf;border:1px solid #fdfdfd"></div>
<div class="r" style="left:401px;top:724px;width:169px;height:1px;background:#8c8c8c"></div>
<div class="t k" style="left:402px;top:708px;font-size:12px;line-height:14px;color:#000;font-family:'Liberation Sans', sans-serif;">毛普仁</div>
<div class="r" style="left:580px;top:718px;width:1px;height:1px;background:#606060"></div>
<div class="r" style="left:586px;top:718px;width:1px;height:1px;background:#606060"></div>
<div class="t k" style="left:605px;top:708px;font-size:12px;line-height:14px;color:#000;font-family:'Liberation Sans', sans-serif;">录入</div>
<div class="t n" style="left:634px;top:708px;color:#000;"><span class="c">2</span><span class="c">0</span><span class="c">2</span><span class="c">3</span><span class="c"><i class="hy"></i></span><span class="c">1</span><span class="c">2</span><span class="c"><i class="hy"></i></span><span class="c">1</span><span class="c">4</span></div>
<div class="t k" style="left:727px;top:708px;font-size:12px;line-height:14px;color:#000;font-family:'Liberation Sans', sans-serif;">系统管理员</div>
<div class="t k" style="left:899px;top:708px;font-size:12px;line-height:14px;color:#000;font-family:'Liberation Sans', sans-serif;">审核</div>
<div class="t n" style="left:928px;top:708px;color:#000;"><span class="c">2</span><span class="c">0</span><span class="c">2</span><span class="c">3</span><span class="c"><i class="hy"></i></span><span class="c">1</span><span class="c">2</span><span class="c"><i class="hy"></i></span><span class="c">2</span><span class="c">0</span></div>
<div class="t k" style="left:1019px;top:708px;font-size:12px;line-height:14px;color:#000;font-family:'Liberation Sans', sans-serif;">系统管理员</div>
<div class="t k" style="left:22px;top:736px;font-size:12px;line-height:14px;color:#000;font-family:'Liberation Sans', sans-serif;">备注</div>
<div class="r" style="left:109px;top:732px;width:1044px;height:20px;background:#cce8cf;border:1px solid #fdfdfd"></div>
<div class="r" style="left:109px;top:752px;width:1045px;height:1px;background:#8c8c8c"></div>
<div class="r" style="left:1135px;top:733px;width:17px;height:18px;background:#f0f0f0;border-left:1px solid #fff;border-right:1px solid #fff"></div>
<svg class="r" style="left:1138px;top:735px" width="12" height="17" viewBox="0 0 12 17"><path d="M2 7 L10 7 L7 2 L5 2 Z M2 11 L10 11 L7 15.8 L5 15.8 Z" fill="#a0a0a0"/></svg>
<svg class="r" style="left:16px;top:760px" width="16" height="19" viewBox="0 0 16 19"><path d="M1.5 1.5 H10 L14 5.5 V17.5 H1.5 Z" fill="#fff" stroke="#000" stroke-width="1.4"/><path d="M5 8 Q5 5 9 5 M8 3.5 L10 5 L8 6.5" stroke="#0a8a0a" stroke-width="1.6" fill="none"/><path d="M11 10 Q11 13 7 13 M8 11.5 L6 13 L8 14.5" stroke="#0a8a0a" stroke-width="1.6" fill="none"/></svg>
<div class="t k" style="left:42px;top:761px;font-size:12px;line-height:14px;color:#0c3cc0;font-family:'Liberation Sans', sans-serif;">业务</div>
<div class="t k" style="left:93px;top:761px;line-height:14px;font-size:12px;color:#037474">库存<span style="font-family:'Liberation Mono', monospace;font-size:9px;position:relative;top:-4px">~~</span></div>
<div class="t k" style="left:157px;top:761px;line-height:14px;font-size:12px;color:#037474">采购量<span style="font-family:'Liberation Mono', monospace;font-size:10px">++</span></div>
<div class="t k" style="left:216px;top:761px;line-height:14px;font-size:12px;color:#037474">应付账<span style="font-family:'Liberation Mono', monospace;font-size:10px">+</span></div>
<div class="t k" style="left:344px;top:761px;font-size:12px;line-height:14px;color:#037474;font-family:'Liberation Sans', sans-serif;">虚拟库影响</div>
<div class="t k" style="left:470px;top:761px;font-size:12px;line-height:14px;color:#0c3cc0;font-family:'Liberation Sans', sans-serif;">创建=></div>
<div class="t k" style="left:513px;top:761px;font-size:12px;line-height:14px;color:#037474;font-family:'Liberation Sans', sans-serif;">入库单</div>
<div class="t k" style="left:559px;top:761px;font-size:12px;line-height:14px;color:#037474;font-family:'Liberation Sans', sans-serif;">采购发票</div>
<div class="t k" style="left:617px;top:761px;font-size:12px;line-height:14px;color:#037474;font-family:'Liberation Sans', sans-serif;">已完成</div>
<div class="t k" style="left:673px;top:761px;font-size:12px;line-height:14px;color:#901010;font-family:'Liberation Sans', sans-serif;">采购退货</div>
<div class="t k" style="left:738px;top:761px;font-size:12px;line-height:14px;color:#901010;font-family:'Liberation Sans', sans-serif;">未完成</div>
</body></html>
